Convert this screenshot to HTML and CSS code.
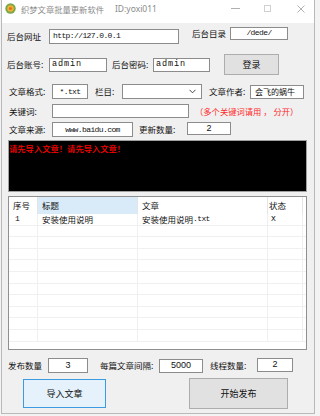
FILE: index.html
```html
<!DOCTYPE html>
<html lang="zh-CN">
<head>
    <meta charset="UTF-8">
    <meta name="viewport" content="width=device-width, initial-scale=1.0">
    <title>织梦文章批量更新软件</title>
    <link rel="stylesheet" href="styles.css">
</head>
<body>

    <!-- Janela principal -->
    <div class="window">
        <!-- Barra de título -->
        <div class="titlebar">
            <svg class="app-icon" width="11" height="11" viewBox="0 0 11 11">
                <circle cx="5.5" cy="5.5" r="5.2" fill="#7aa84a"/>
                <circle cx="5.5" cy="5.5" r="3.2" fill="#f2b233"/>
                <circle cx="5.5" cy="5.5" r="1.6" fill="#e0702a"/>
            </svg>
            <span class="title-text">织梦文章批量更新软件</span>
            <span class="title-id">ID:yoxi011</span>
            <div class="controls">
                <svg class="ctl-min" width="9" height="9" viewBox="0 0 9 9"><line x1="0" y1="4.5" x2="9" y2="4.5" stroke="#b0b0b0" stroke-width="1"/></svg>
                <svg class="ctl-max" width="7" height="7" viewBox="0 0 7 7"><rect x="0.5" y="0.5" width="6" height="6" fill="none" stroke="#d0d0d0" stroke-width="1"/></svg>
                <svg class="ctl-close" width="8" height="8" viewBox="0 0 8 8"><path d="M0.5 0.5 L7.5 7.5 M7.5 0.5 L0.5 7.5" stroke="#b0b0b0" stroke-width="1"/></svg>
            </div>
        </div>

        <!-- Linha 1 -->
        <div class="row row1">
            <span class="label lb-url">后台网址</span>
            <div class="field f-url mono">http://127.0.0.1</div>
            <div class="group-dir">
                <span class="label lb-dir">后台目录</span>
                <div class="field f-dir mono center">/dede/</div>
            </div>
        </div>

        <!-- Linha 2 -->
        <div class="row row2">
            <span class="label lb-user">后台账号:</span>
            <div class="field f-user mono-wide">admin</div>
            <span class="label lb-pass">后台密码:</span>
            <div class="field f-pass mono-wide">admin</div>
            <div class="btn btn-login">登录</div>
        </div>

        <!-- Linha 3 -->
        <div class="row row3">
            <span class="label lb-fmt">文章格式:</span>
            <div class="field f-fmt mono center">*.txt</div>
            <span class="label lb-col">栏目:</span>
            <div class="field f-col">
                <svg class="chevron" width="7" height="5" viewBox="0 0 7 5"><path d="M0.5 0.8 L3.5 3.8 L6.5 0.8" fill="none" stroke="#444" stroke-width="1"/></svg>
            </div>
            <span class="label lb-author">文章作者:</span>
            <div class="field f-author">会飞的蜗牛</div>
        </div>

        <!-- Linha 4 -->
        <div class="row row4">
            <span class="label lb-kw">关键词:</span>
            <div class="field f-kw"></div>
            <span class="hint">（多个关键词请用 ， 分开）</span>
        </div>

        <!-- Linha 5 -->
        <div class="row row5">
            <span class="label lb-src">文章来源:</span>
            <div class="field f-src mono center">www.baidu.com</div>
            <span class="label lb-num">更新数量:</span>
            <div class="field f-num num center">2</div>
        </div>

        <!-- Console preto -->
        <div class="console">请先导入文章！请先导入文章！</div>

        <!-- Lista de artigos -->
        <div class="list">
            <div class="list-row list-head">
                <div class="cell">序号</div>
                <div class="cell cell-active">标题</div>
                <div class="cell">文章</div>
                <div class="cell cell-state">状态</div>
                <div class="cell"></div>
            </div>
            <div class="list-row">
                <div class="cell mono">1</div>
                <div class="cell">安装使用说明</div>
                <div class="cell">安装使用说明<span class="mono">.txt</span></div>
                <div class="cell cell-state mono">X</div>
                <div class="cell"></div>
            </div>
            <div class="list-row"><div class="cell"></div><div class="cell"></div><div class="cell"></div><div class="cell"></div><div class="cell"></div></div>
            <div class="list-row"><div class="cell"></div><div class="cell"></div><div class="cell"></div><div class="cell"></div><div class="cell"></div></div>
            <div class="list-row"><div class="cell"></div><div class="cell"></div><div class="cell"></div><div class="cell"></div><div class="cell"></div></div>
            <div class="list-row"><div class="cell"></div><div class="cell"></div><div class="cell"></div><div class="cell"></div><div class="cell"></div></div>
            <div class="list-row"><div class="cell"></div><div class="cell"></div><div class="cell"></div><div class="cell"></div><div class="cell"></div></div>
            <div class="list-row"><div class="cell"></div><div class="cell"></div><div class="cell"></div><div class="cell"></div><div class="cell"></div></div>
            <div class="list-row"><div class="cell"></div><div class="cell"></div><div class="cell"></div><div class="cell"></div><div class="cell"></div></div>
            <div class="list-row"><div class="cell"></div><div class="cell"></div><div class="cell"></div><div class="cell"></div><div class="cell"></div></div>
            <div class="list-row"><div class="cell"></div><div class="cell"></div><div class="cell"></div><div class="cell"></div><div class="cell"></div></div>
            <div class="list-row"><div class="cell"></div><div class="cell"></div><div class="cell"></div><div class="cell"></div><div class="cell"></div></div>
        </div>

        <!-- Linha inferior -->
        <div class="row row6">
            <span class="label lb-pub">发布数量</span>
            <div class="field f-pub num center">3</div>
            <span class="label lb-gap">每篇文章间隔:</span>
            <div class="field f-gap num center">5000</div>
            <span class="label lb-thr">线程数量:</span>
            <div class="field f-thr num center">2</div>
        </div>

        <!-- Botões -->
        <div class="row row7">
            <div class="btn btn-import">导入文章</div>
            <div class="btn btn-start">开始发布</div>
        </div>
    </div>

</body>
</html>
```

FILE: styles.css
```css
/* Reset básico */
* {
    box-sizing: border-box;
    margin: 0;
    padding: 0;
}

body {
    background-color: #f3f3f3;
    padding-left: 1px;
    font-family: "Noto Sans CJK SC", "Noto Sans", sans-serif;
    font-size: 8.5px;
    color: #111;
}

/* Janela */
.window {
    width: 314px;
    height: 414px;
    background-color: #f0f0f0;
    border: 1px solid #b9b9b9;
    border-top: none;
    overflow: hidden;
}

/* Barra de título */
.titlebar {
    height: 23px;
    background-color: #ffffff;
    display: flex;
    align-items: center;
    padding-bottom: 6px;
}

.app-icon {
    margin-left: 3px;
}

.title-text {
    margin-left: 5px;
    color: #8a8a8a;
    font-size: 8.3px;
}

.title-id {
    margin-left: 11px;
    color: #8a8a8a;
    font-family: "Noto Sans", sans-serif;
    font-size: 8.5px;
}

.controls {
    margin-left: auto;
    display: flex;
    align-items: center;
}

.ctl-min {
    margin-right: 24px;
}

.ctl-max {
    margin-right: 26px;
}

.ctl-close {
    margin-right: 9px;
}

/* Linhas do formulário */
.row {
    display: flex;
    align-items: center;
}

.label {
    white-space: nowrap;
    line-height: 1;
}

.field {
    background-color: #ffffff;
    border: 1px solid #8c8c8c;
    display: flex;
    align-items: center;
    white-space: nowrap;
    overflow: hidden;
    line-height: 1;
    padding-left: 2px;
}

.center {
    justify-content: center;
    padding-left: 0;
}

.mono {
    font-family: "Liberation Mono", monospace;
    font-size: 8px;
    letter-spacing: -0.6px;
}

.mono-wide {
    font-family: "Liberation Mono", monospace;
    font-size: 8.5px;
    letter-spacing: 0.9px;
}

.num {
    font-family: "Liberation Sans", sans-serif;
    font-size: 9px;
}

.btn {
    display: flex;
    align-items: center;
    justify-content: center;
    background-color: #e1e1e1;
    border: 1px solid #adadad;
    font-size: 9px;
}

/* Linha 1 */
.row1 {
    margin-top: 4px;
    height: 18px;
}

.lb-url {
    margin-left: 5px;
    width: 42px;
}

.f-url {
    width: 130px;
    height: 15px;
    padding-left: 3px;
}

.group-dir {
    display: flex;
    align-items: center;
    margin-bottom: 6px;
}

.lb-dir {
    margin-left: 13px;
    width: 38px;
}

.f-dir {
    width: 58px;
    height: 13px;
}

/* Linha 2 */
.row2 {
    margin-top: 9px;
    height: 21px;
}

.lb-user {
    margin-left: 5px;
    width: 42px;
}

.f-user {
    width: 58px;
    height: 14px;
}

.lb-pass {
    margin-left: 5px;
    width: 41px;
}

.f-pass {
    width: 57px;
    height: 14px;
}

.btn-login {
    margin-left: 14px;
    width: 55px;
    height: 21px;
}

/* Linha 3 */
.row3 {
    margin-top: 8px;
    height: 17px;
}

.lb-fmt {
    margin-left: 7px;
    width: 43px;
}

.f-fmt {
    width: 36px;
    height: 15px;
}

.lb-col {
    margin-left: 7px;
    width: 27px;
}

.f-col {
    width: 80px;
    height: 15px;
    justify-content: flex-end;
    padding-right: 5px;
}

.lb-author {
    margin-left: 7px;
    width: 41px;
}

.f-author {
    width: 54px;
    height: 14px;
    padding-left: 4px;
    font-size: 8px;
}

/* Linha 4 */
.row4 {
    margin-top: 3px;
    height: 16px;
}

.lb-kw {
    margin-left: 7px;
    width: 43px;
}

.f-kw {
    width: 137px;
    height: 14px;
}

.hint {
    margin-left: 6px;
    color: #ff2a2a;
    font-size: 8.3px;
    white-space: nowrap;
}

/* Linha 5 */
.row5 {
    margin-top: 2px;
    height: 17px;
}

.lb-src {
    margin-left: 7px;
    width: 43px;
}

.f-src {
    width: 81px;
    height: 15px;
}

.lb-num {
    margin-left: 6px;
    width: 48px;
}

.f-num {
    width: 44px;
    height: 13px;
    margin-bottom: 2px;
}

/* Console */
.console {
    margin-top: 2px;
    margin-left: 6px;
    width: 299px;
    height: 52px;
    background-color: #000000;
    border: 1px solid #a0a0a0;
    color: #ff0000;
    font-weight: 500;
    font-size: 8.3px;
    line-height: 1;
    padding: 3px 0 0 0;
}

/* Lista */
.list {
    margin-top: 4px;
    margin-left: 6px;
    width: 299px;
    height: 154px;
    background-color: #ffffff;
    border: 1px solid #8f8f8f;
    overflow: hidden;
}

.list-row {
    display: grid;
    grid-template-columns: 29px 100px 130px 35px 1fr;
    height: 11.6px;
    border-bottom: 1px solid #f0f0f0;
}

.list-head {
    height: 17px;
    border-bottom: none;
}

.cell {
    border-right: 1px solid #f0f0f0;
    display: flex;
    align-items: center;
    padding-left: 4px;
    white-space: nowrap;
    overflow: hidden;
    line-height: 1;
}

.list-head .cell {
    border-right: 1px solid #e5e5e5;
    font-size: 8.5px;
}

.cell-active {
    background-color: #d9ebf9;
}

.cell-state {
    padding-left: 1px;
}

.list-row .mono {
    font-size: 8px;
}

.list-row .cell.mono {
    padding-left: 6px;
}

.list-row .cell-state.mono {
    padding-left: 3px;
}

/* Linha inferior */
.row6 {
    margin-top: 7px;
    height: 17px;
}

.lb-pub {
    margin-left: 6px;
    width: 40px;
}

.f-pub {
    width: 40px;
    height: 15px;
}

.lb-gap {
    margin-left: 12px;
    width: 59px;
}

.f-gap {
    width: 44px;
    height: 14px;
}

.lb-thr {
    margin-left: 7px;
    width: 47px;
}

.f-thr {
    width: 36px;
    height: 14px;
    margin-bottom: 2px;
}

/* Botões */
.row7 {
    margin-top: 4px;
    align-items: flex-start;
}

.btn-import {
    margin-top: 1px;
    margin-left: 21px;
    width: 83px;
    height: 29px;
    background-color: #e5f1fb;
    border: 1px solid #3c9be0;
}

.btn-start {
    margin-left: 83px;
    width: 99px;
    height: 31px;
}
```
